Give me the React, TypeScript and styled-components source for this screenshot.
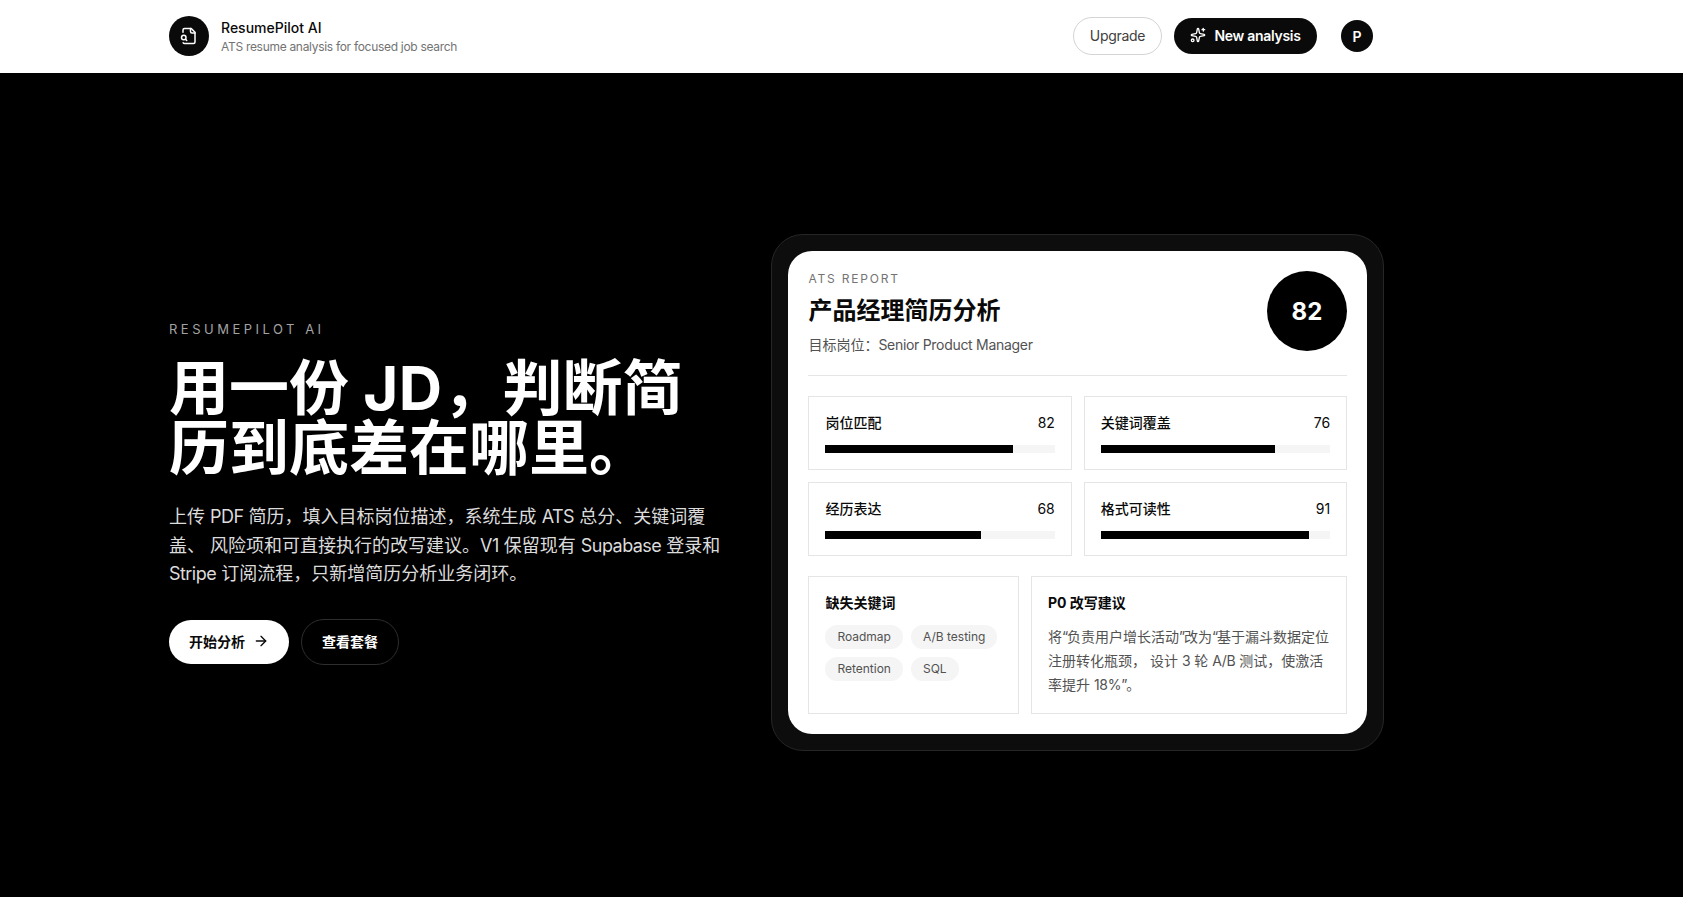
import { FC } from 'react'
import styled, { createGlobalStyle } from 'styled-components'
import { ArrowRight, Sparkles } from 'lucide-react'

const metrics = [
  { label: '岗位匹配', score: 82 },
  { label: '关键词覆盖', score: 76 },
  { label: '经历表达', score: 68 },
  { label: '格式可读性', score: 91 },
]

const keywords = ['Roadmap', 'A/B testing', 'Retention', 'SQL']

const FileSearchIcon: FC = () => (
  <svg
    width='18'
    height='18'
    viewBox='0 0 24 24'
    fill='none'
    stroke='currentColor'
    strokeWidth='2'
    strokeLinecap='round'
    strokeLinejoin='round'
  >
    <path d='M14 2v4a2 2 0 0 0 2 2h4' />
    <path d='M4.268 21a2 2 0 0 0 1.727 1H18a2 2 0 0 0 2-2V7l-5-5H6a2 2 0 0 0-2 2v3' />
    <path d='m9 18-1.5-1.5' />
    <circle cx='5' cy='14' r='3' />
  </svg>
)

const App: FC = () => {
  return (
    <>
      <GlobalStyle />
      <Header>
        <HeaderInner>
          <Brand>
            <LogoMark>
              <FileSearchIcon />
            </LogoMark>
            <div>
              <BrandName>ResumePilot AI</BrandName>
              <BrandTagline>ATS resume analysis for focused job search</BrandTagline>
            </div>
          </Brand>
          <HeaderActions>
            <UpgradeButton>Upgrade</UpgradeButton>
            <NewButton>
              <Sparkles size={16} strokeWidth={2} />
              New analysis
            </NewButton>
            <Avatar>P</Avatar>
          </HeaderActions>
        </HeaderInner>
      </Header>

      <Hero>
        <HeroGrid>
          <HeroCopy>
            <Eyebrow>RESUMEPILOT AI</Eyebrow>
            <Title>
              用一份 <TitleLatin>JD</TitleLatin>，判断简历到底差在哪里。
            </Title>
            <Lead>
              上传 <LeadLatin>PDF</LeadLatin> 简历，填入目标岗位描述，系统生成 <LeadLatin>ATS</LeadLatin> 总分、关键词覆盖、
              风险项和可直接执行的改写建议。<LeadLatin>V1</LeadLatin> 保留现有 <LeadLatin>Supabase</LeadLatin> 登录和{' '}
              <LeadLatin>Stripe</LeadLatin> 订阅流程，只新增简历分析业务闭环。
            </Lead>
            <CtaRow>
              <PrimaryCta>
                开始分析
                <ArrowRight size={16} strokeWidth={2} />
              </PrimaryCta>
              <GhostCta>查看套餐</GhostCta>
            </CtaRow>
          </HeroCopy>

          <Frame>
            <Report>
              <ReportHead>
                <div>
                  <ReportKicker>ATS REPORT</ReportKicker>
                  <ReportTitle>产品经理简历分析</ReportTitle>
                  <ReportTarget>
                    目标岗位：<Latin>Senior Product Manager</Latin>
                  </ReportTarget>
                </div>
                <ScoreCircle>82</ScoreCircle>
              </ReportHead>

              <MetricGrid>
                {metrics.map((metric) => (
                  <Metric key={metric.label}>
                    <MetricRow>
                      <MetricLabel>{metric.label}</MetricLabel>
                      <MetricScore>{metric.score}</MetricScore>
                    </MetricRow>
                    <Track>
                      <Fill style={{ width: `${metric.score}%` }} />
                    </Track>
                  </Metric>
                ))}
              </MetricGrid>

              <DetailGrid>
                <Detail>
                  <DetailTitle>缺失关键词</DetailTitle>
                  <Chips>
                    {keywords.map((keyword) => (
                      <Chip key={keyword}>{keyword}</Chip>
                    ))}
                  </Chips>
                </Detail>
                <Detail>
                  <DetailTitle>P0 改写建议</DetailTitle>
                  <DetailText>
                    将<Quote>“</Quote>负责用户增长活动<Quote>”</Quote>改为<Quote>“</Quote>基于漏斗数据定位注册转化瓶颈，
                    设计 <Latin>3</Latin> 轮 <Latin>A/B</Latin> 测试，使激活率提升 <Latin>18%</Latin>
                    <Quote>”</Quote>。
                  </DetailText>
                </Detail>
              </DetailGrid>
            </Report>
          </Frame>
        </HeroGrid>
      </Hero>
    </>
  )
}

export default App

const GlobalStyle = createGlobalStyle`
  * {
    box-sizing: border-box;
  }
  html, body {
    margin: 0;
    background: #000;
    overflow: hidden;
    font-family: Inter, 'Noto Sans CJK SC', sans-serif;
  }
  button {
    font-family: inherit;
    cursor: pointer;
  }
`

const Latin = styled.span`
  letter-spacing: -0.3px;
`

const LeadLatin = styled.span`
  letter-spacing: -0.55px;
`

const TitleLatin = styled.span`
  letter-spacing: 0.5px;
`

const Quote = styled.span`
  letter-spacing: -1.2px;
`

const Header = styled.header`
  height: 73px;
  padding-bottom: 1px;
  background: #fff;
`

const HeaderInner = styled.div`
  width: 1204px;
  height: 100%;
  margin-left: 169px;
  display: flex;
  align-items: center;
  justify-content: space-between;
`

const Brand = styled.div`
  display: flex;
  align-items: center;
  gap: 12px;
`

const LogoMark = styled.div`
  width: 40px;
  height: 40px;
  border-radius: 50%;
  background: #0a0a0a;
  color: #fff;
  display: flex;
  align-items: center;
  justify-content: center;
`

const BrandName = styled.div`
  font-size: 14px;
  line-height: 20px;
  font-weight: 500;
  color: #0a0a0a;
`

const BrandTagline = styled.div`
  margin-top: 1px;
  font-size: 12px;
  line-height: 16px;
  letter-spacing: -0.3px;
  color: #737373;
`

const HeaderActions = styled.div`
  display: flex;
  align-items: center;
`

const UpgradeButton = styled.button`
  width: 89px;
  height: 38px;
  padding: 0 0 2px;
  border: 1px solid #d4d4d4;
  border-radius: 19px;
  background: #fff;
  color: #404040;
  font-size: 14px;
  font-weight: 400;
  letter-spacing: -0.3px;
`

const NewButton = styled.button`
  width: 143px;
  height: 36px;
  margin-left: 12px;
  padding: 0 0 2px;
  border: 0;
  border-radius: 18px;
  background: #0a0a0a;
  color: #fff;
  font-size: 14px;
  font-weight: 600;
  letter-spacing: -0.3px;
  display: flex;
  align-items: center;
  justify-content: center;
  gap: 8px;
`

const Avatar = styled.div`
  width: 32px;
  height: 32px;
  margin-left: 24px;
  border-radius: 50%;
  background: #0a0a0a;
  color: #fff;
  font-size: 14px;
  font-weight: 600;
  display: flex;
  align-items: center;
  justify-content: center;
`

const Hero = styled.main`
  height: 824px;
  background: #000;
  padding-top: 161px;
`

const HeroGrid = styled.div`
  width: 1215px;
  margin-left: 169px;
  display: grid;
  grid-template-columns: 554.4px 612.6px;
  column-gap: 48px;
  align-items: center;
`

const HeroCopy = styled.div`
  color: #fff;
`

const Eyebrow = styled.div`
  margin-top: -1px;
  font-size: 13px;
  line-height: 20px;
  letter-spacing: 3.5px;
  color: #a3a3a3;
`

const Title = styled.h1`
  margin: 19px 0 0;
  font-size: 60px;
  line-height: 60px;
  font-weight: 700;
  letter-spacing: 0;
  color: #fff;
`

const Lead = styled.p`
  margin: 25px 0 0;
  font-size: 18px;
  line-height: 28.8px;
  color: #dcdcdc;
`

const CtaRow = styled.div`
  margin-top: 31px;
  display: flex;
  gap: 12px;
`

const PrimaryCta = styled.button`
  width: 120px;
  height: 44px;
  padding: 0 0 2px;
  border: 0;
  border-radius: 22px;
  background: #fff;
  color: #0a0a0a;
  font-size: 14px;
  font-weight: 600;
  display: flex;
  align-items: center;
  justify-content: center;
  gap: 8px;
`

const GhostCta = styled.button`
  width: 98px;
  height: 46px;
  margin-top: -1px;
  padding: 0 0 2px;
  border: 1px solid #2e2e2e;
  border-radius: 23px;
  background: transparent;
  color: #fff;
  font-size: 14px;
  font-weight: 600;
`

const Frame = styled.div`
  padding: 16px;
  border: 1px solid #262626;
  border-radius: 32px;
  background: #0d0d0d;
`

const Report = styled.div`
  padding: 20px;
  border-radius: 24px;
  background: #fff;
`

const ReportHead = styled.div`
  display: flex;
  justify-content: space-between;
  align-items: flex-start;
  padding-bottom: 20px;
  border-bottom: 1px solid #e5e5e5;
`

const ReportKicker = styled.div`
  font-size: 12px;
  line-height: 16px;
  letter-spacing: 0.15em;
  color: #737373;
`

const ReportTitle = styled.h2`
  margin: 8px 0 0;
  font-size: 24px;
  line-height: 32px;
  font-weight: 700;
  color: #0a0a0a;
`

const ReportTarget = styled.div`
  margin-top: 8px;
  font-size: 14px;
  line-height: 20px;
  color: #525252;
`

const ScoreCircle = styled.div`
  width: 80px;
  height: 80px;
  border-radius: 50%;
  background: #000;
  color: #fff;
  font-size: 24px;
  font-weight: 700;
  display: flex;
  align-items: center;
  justify-content: center;
`

const MetricGrid = styled.div`
  margin-top: 20px;
  display: grid;
  grid-template-columns: 1fr 1fr;
  gap: 12px;
`

const Metric = styled.div`
  padding: 16px;
  border: 1px solid #e5e5e5;
`

const MetricRow = styled.div`
  display: flex;
  align-items: center;
  justify-content: space-between;
  margin-bottom: 12px;
`

const MetricLabel = styled.span`
  font-size: 14px;
  line-height: 20px;
  font-weight: 500;
  color: #0a0a0a;
`

const MetricScore = styled.span`
  font-size: 14px;
  line-height: 20px;
  letter-spacing: -0.1px;
  color: #0a0a0a;
`

const Track = styled.div`
  height: 8px;
  background: #f5f5f5;
`

const Fill = styled.div`
  height: 100%;
  background: #000;
`

const DetailGrid = styled.div`
  margin-top: 20px;
  display: grid;
  grid-template-columns: 2fr 3fr;
  gap: 12px;
`

const Detail = styled.div`
  padding: 16px;
  border: 1px solid #e5e5e5;
`

const DetailTitle = styled.div`
  font-size: 14px;
  line-height: 20px;
  font-weight: 700;
  color: #0a0a0a;
`

const Chips = styled.div`
  margin-top: 12px;
  display: flex;
  flex-wrap: wrap;
  gap: 8px;
`

const Chip = styled.span`
  padding: 0 12px;
  height: 24px;
  border-radius: 12px;
  background: #f5f5f5;
  color: #525252;
  font-size: 12px;
  line-height: 24px;
`

const DetailText = styled.p`
  margin: 12px 0 0;
  font-size: 14px;
  line-height: 24px;
  color: #525252;
`
